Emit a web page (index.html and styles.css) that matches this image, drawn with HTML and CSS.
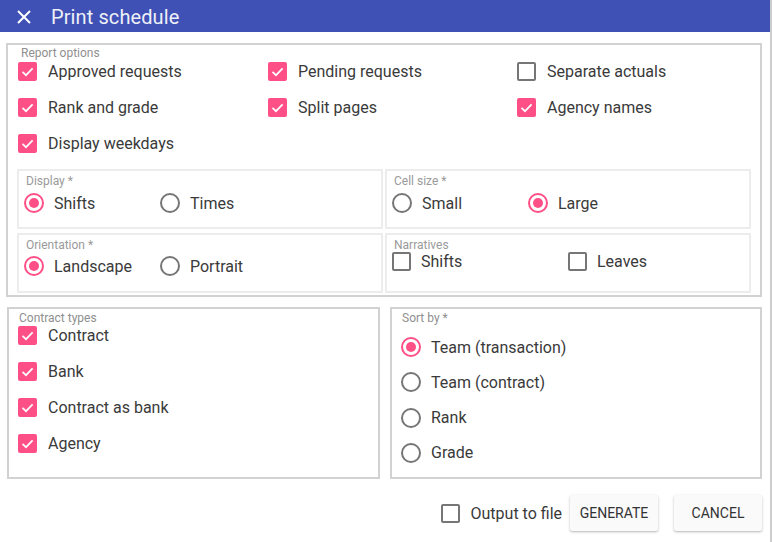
FILE: index.html
```html
<!DOCTYPE html>
<html>
<head>
<meta charset="utf-8">
<title>Print schedule</title>
<link rel="stylesheet" href="styles.css">
</head>
<body>
<div class="dialog">
  <header class="titlebar">
    <svg class="close" viewBox="0 0 14 14" width="14" height="14"><path d="M1 1L13 13M13 1L1 13" stroke="#fff" stroke-width="2" fill="none"/></svg>
    <span class="title">Print schedule</span>
  </header>

  <section class="report">
    <div class="box-label report-label">Report options</div>
    <div class="check-grid">
      <label class="opt"><span class="cb on"><svg viewBox="0 0 19 19"><path d="M4.5 9.8L8 13.2L14.6 6.3"/></svg></span>Approved requests</label>
      <label class="opt"><span class="cb on"><svg viewBox="0 0 19 19"><path d="M4.5 9.8L8 13.2L14.6 6.3"/></svg></span>Pending requests</label>
      <label class="opt"><span class="cb"></span>Separate actuals</label>
      <label class="opt"><span class="cb on"><svg viewBox="0 0 19 19"><path d="M4.5 9.8L8 13.2L14.6 6.3"/></svg></span>Rank and grade</label>
      <label class="opt"><span class="cb on"><svg viewBox="0 0 19 19"><path d="M4.5 9.8L8 13.2L14.6 6.3"/></svg></span>Split pages</label>
      <label class="opt"><span class="cb on"><svg viewBox="0 0 19 19"><path d="M4.5 9.8L8 13.2L14.6 6.3"/></svg></span>Agency names</label>
      <label class="opt"><span class="cb on"><svg viewBox="0 0 19 19"><path d="M4.5 9.8L8 13.2L14.6 6.3"/></svg></span>Display weekdays</label>
    </div>

    <div class="sub-grid">
      <div class="sub-box">
        <div class="sub-label">Display *</div>
        <div class="radio-row">
          <label class="opt ropt"><span class="rb on"></span>Shifts</label>
          <label class="opt ropt"><span class="rb"></span>Times</label>
        </div>
      </div>
      <div class="sub-box">
        <div class="sub-label">Cell size *</div>
        <div class="radio-row">
          <label class="opt ropt"><span class="rb"></span>Small</label>
          <label class="opt ropt"><span class="rb on"></span>Large</label>
        </div>
      </div>
      <div class="sub-box">
        <div class="sub-label">Orientation *</div>
        <div class="radio-row orient">
          <label class="opt ropt"><span class="rb on"></span>Landscape</label>
          <label class="opt ropt"><span class="rb"></span>Portrait</label>
        </div>
      </div>
      <div class="sub-box">
        <div class="sub-label">Narratives</div>
        <div class="check-row">
          <label class="opt copt"><span class="cb"></span>Shifts</label>
          <label class="opt copt"><span class="cb"></span>Leaves</label>
        </div>
      </div>
    </div>
  </section>

  <div class="lower">
    <section class="panel contract">
      <div class="box-label">Contract types</div>
      <div class="stack">
        <label class="opt"><span class="cb on"><svg viewBox="0 0 19 19"><path d="M4.5 9.8L8 13.2L14.6 6.3"/></svg></span>Contract</label>
        <label class="opt"><span class="cb on"><svg viewBox="0 0 19 19"><path d="M4.5 9.8L8 13.2L14.6 6.3"/></svg></span>Bank</label>
        <label class="opt"><span class="cb on"><svg viewBox="0 0 19 19"><path d="M4.5 9.8L8 13.2L14.6 6.3"/></svg></span>Contract as bank</label>
        <label class="opt"><span class="cb on"><svg viewBox="0 0 19 19"><path d="M4.5 9.8L8 13.2L14.6 6.3"/></svg></span>Agency</label>
      </div>
    </section>
    <section class="panel sortby">
      <div class="box-label">Sort by *</div>
      <div class="stack rstack">
        <label class="opt"><span class="rb on"></span>Team (transaction)</label>
        <label class="opt"><span class="rb"></span>Team (contract)</label>
        <label class="opt"><span class="rb"></span>Rank</label>
        <label class="opt"><span class="rb"></span>Grade</label>
      </div>
    </section>
  </div>

  <footer class="actions">
    <label class="opt out"><span class="cb"></span>Output to file</label>
    <button class="btn">GENERATE</button>
    <button class="btn">CANCEL</button>
  </footer>
</div>
</body>
</html>
```

FILE: styles.css
```css
* { box-sizing: border-box; }

html, body {
  margin: 0;
  padding: 0;
  background: #fff;
}

body {
  font-family: Roboto, "Liberation Sans", sans-serif;
  color: #3a3a3a;
}

.dialog {
  width: 772px;
  height: 542px;
  border-right: 2px solid #cdcdcd;
  overflow: hidden;
}

.titlebar {
  height: 32px;
  background: #3f51b5;
  display: flex;
  align-items: center;
}

.close {
  margin-left: 17px;
  margin-top: 1px;
  flex: none;
}

.title {
  margin-left: 20px;
  margin-top: 2px;
  font-size: 20px;
  color: #eef0f8;
  letter-spacing: 0.1px;
}

/* generic option */
.opt {
  display: flex;
  align-items: center;
  height: 24px;
  font-size: 16px;
  color: #3a3a3a;
  white-space: nowrap;
}

.cb {
  width: 19px;
  height: 19px;
  border: 2px solid #767676;
  border-radius: 2px;
  margin-right: 11px;
  flex: none;
  display: flex;
  align-items: center;
  justify-content: center;
}

.cb.on {
  background: #ff4f87;
  border-color: #ff4f87;
}

.cb svg {
  width: 19px;
  height: 19px;
  flex: none;
}

.cb svg path {
  fill: none;
  stroke: #fff;
  stroke-width: 1.7;
}

.rb {
  width: 20px;
  height: 20px;
  border: 2px solid #767676;
  border-radius: 50%;
  margin-right: 10px;
  flex: none;
  display: flex;
  align-items: center;
  justify-content: center;
}

.rb.on {
  border-color: #ff4f87;
}

.rb.on::after {
  content: "";
  width: 10px;
  height: 10px;
  border-radius: 50%;
  background: #ff4f87;
}

.box-label {
  font-size: 12px;
  line-height: 14px;
  color: #8f8f8f;
  padding-top: 1px;
}

/* report options */
.report {
  margin: 11px 0 0 6px;
  width: 756px;
  height: 254px;
  border: 2px solid #d2d2d2;
}

.report-label {
  padding-left: 13px;
}

.check-grid {
  margin-top: -1px;
  padding-left: 10px;
  display: grid;
  grid-template-columns: 250px 249px auto;
  row-gap: 12px;
}

.sub-grid {
  margin: 14px 0 0 9px;
  width: 734px;
  display: grid;
  grid-template-columns: 366px 366px;
  grid-template-rows: 60px 60px;
  column-gap: 2px;
  row-gap: 4px;
}

.sub-box {
  border: 2px solid #ececec;
  padding-left: 5px;
}

.sub-label {
  font-size: 12px;
  line-height: 14px;
  color: #9a9a9a;
  padding: 3px 0 0 2px;
}

.radio-row {
  display: flex;
  margin-top: 4px;
}

.radio-row.orient {
  margin-top: 3px;
}

.ropt {
  width: 136px;
  height: 22px;
}

.check-row {
  display: flex;
  margin-top: 0;
}

.copt {
  width: 176px;
  height: 19px;
}

.copt .cb {
  margin-right: 10px;
}

/* lower panels */
.lower {
  display: flex;
  margin: 10px 0 0 7px;
  gap: 10px;
}

.panel {
  height: 172px;
  border: 2px solid #d2d2d2;
}

.panel .box-label {
  padding-top: 2px;
}

.contract {
  width: 373px;
}

.contract .box-label {
  padding-left: 10px;
}

.sortby {
  width: 372px;
}

.sortby .box-label {
  padding-left: 10px;
}

.stack {
  display: flex;
  flex-direction: column;
  gap: 12.3px;
  padding-left: 9px;
  margin-top: -2px;
}

.rstack {
  margin-top: 10px;
  gap: 11.3px;
}

/* footer */
.actions {
  display: flex;
  justify-content: flex-end;
  align-items: center;
  margin-top: 16px;
  padding-right: 8px;
  height: 36px;
}

.out {
  margin-right: 8px;
}

.btn {
  min-width: 88px;
  height: 36px;
  padding: 0 8px;
  border: none;
  border-radius: 2px;
  background: #fafafa;
  box-shadow: 0 1px 3px rgba(0, 0, 0, 0.22), 0 1px 1px rgba(0, 0, 0, 0.08);
  font-family: Roboto, "Liberation Sans", sans-serif;
  font-size: 14px;
  color: #333;
}

.btn + .btn {
  margin-left: 16px;
}
```
